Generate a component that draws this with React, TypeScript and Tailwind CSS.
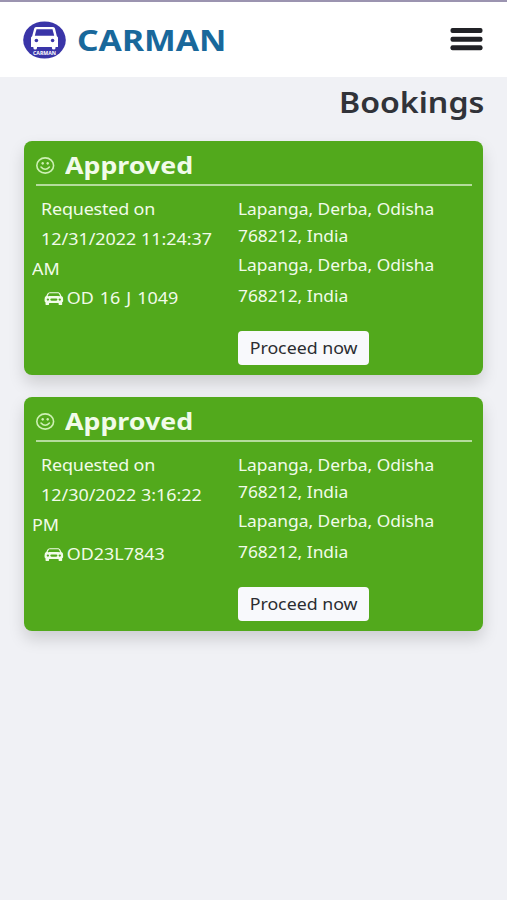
import { BsCarFrontFill } from "react-icons/bs";

const bookings = [
  {
    id: 1,
    status: "Approved",
    requestedOn: "12/31/2022 11:24:37 AM",
    vehicle: "OD 16 J 1049",
    from: ["Lapanga, Derba, Odisha", "768212, India"],
    to: ["Lapanga, Derba, Odisha", "768212, India"],
  },
  {
    id: 2,
    status: "Approved",
    requestedOn: "12/30/2022 3:16:22 PM",
    vehicle: "OD23L7843",
    from: ["Lapanga, Derba, Odisha", "768212, India"],
    to: ["Lapanga, Derba, Odisha", "768212, India"],
  },
];

type Booking = (typeof bookings)[number];

function Logo() {
  return (
    <svg width="43" height="38" viewBox="0 0 43 38">
      <ellipse cx="21.5" cy="19" rx="21.3" ry="18.6" fill="#3a35a8" />
      {/* Car body */}
      <path
        d="M13 6h17q1.700 0 2 1.500l1.800 7.500 1.200 1.500v9.500h-2.500v1q0 1.500-1.800 1.500t-1.800-1.500v-1H14v1q0 1.500-1.800 1.500t-1.800-1.500v-1H8v-9.500l1.200-1.500 2-7.500q.3-1.500 1.800-1.500z"
        fill="#fff"
      />
      <path d="M13.500 8.200h16l1.700 6.600h-19.400z" fill="#3a35a8" />
      <circle cx="13.400" cy="19.500" r="1.800" fill="#3a35a8" />
      <circle cx="29.600" cy="19.500" r="1.800" fill="#3a35a8" />
      <text
        x="21.500"
        y="34"
        fontSize="5"
        fontWeight="700"
        textAnchor="middle"
        textLength="23"
        lengthAdjust="spacingAndGlyphs"
        fill="#fff"
      >
        CARMAN
      </text>
    </svg>
  );
}

function MenuIcon() {
  return (
    <svg width="33" height="23" viewBox="0 0 33 23" fill="#212226">
      <rect x="0.500" width="32" height="5" rx="2" />
      <rect x="0.500" y="8.700" width="32" height="5" rx="2" />
      <rect x="0.500" y="17.300" width="32" height="5" rx="2" />
    </svg>
  );
}

function SmileIcon() {
  return (
    <svg width="19" height="17" viewBox="0 0 19 17" fill="none" stroke="#cdf0b4" strokeWidth="1.600">
      <ellipse cx="9.200" cy="8.500" rx="8.400" ry="7.600" />
      <path d="M5 10q4.200 4.600 8.400 0" strokeLinecap="round" />
      <ellipse cx="6.700" cy="6.300" rx="1.200" ry="1.400" fill="#cdf0b4" stroke="none" />
      <ellipse cx="11.700" cy="6.300" rx="1.200" ry="1.400" fill="#cdf0b4" stroke="none" />
    </svg>
  );
}

function BookingCard({ booking }: { booking: Booking }) {
  return (
    <div className="h-[234px] rounded-lg bg-[#52a91c] pl-3 pr-[11px] text-[#f1fbe9] shadow-[0_8px_16px_rgba(0,0,0,0.15)]">
      {/* Status */}
      <div className="flex h-[45px] items-center border-b-2 border-[#b5dc9c]">
        <div className="mt-[6px]">
          <SmileIcon />
        </div>
        <h3 className="ml-[10px] mt-[5px] origin-left scale-x-[1.115] text-2xl font-bold leading-none">
          {booking.status}
        </h3>
      </div>

      <div className="flex pt-2 text-base">
        <div className="-ml-1 w-[206px] shrink-0">
          <div className="w-[170px] origin-left scale-x-[1.12]">
            <p className="leading-[30px]">
              <span className="pl-2 tracking-[-0.15px]">Requested on</span>
              <br />
              <span className="pl-2">{booking.requestedOn}</span>
            </p>
            <p className="flex h-[28px] items-center whitespace-nowrap pl-[11px] [word-spacing:1.2px]">
              <BsCarFrontFill className="mr-[3px] h-[17px] w-[17px]" preserveAspectRatio="none" />
              {booking.vehicle}
            </p>
          </div>
        </div>

        <div className="pt-[2px]">
          <div className="origin-left scale-x-[1.085] whitespace-nowrap">
            <p className="leading-[27px]">
              {booking.from[0]}
              <br />
              {booking.from[1]}
            </p>
            <p className="leading-[31px]">
              {booking.to[0]}
              <br />
              {booking.to[1]}
            </p>
          </div>
          <button className="mt-[19px] flex h-[34px] w-[131px] items-center justify-center rounded-sm bg-[#f8f9fc] text-[#2b2d31]">
            <span className="scale-x-[1.11]">Proceed now</span>
          </button>
        </div>
      </div>
    </div>
  );
}

export default function App() {
  return (
    <div className="min-h-screen border-t-2 border-[#9b94b0] bg-[#f0f1f5] font-['Noto_Sans',sans-serif]">
      {/* Navbar */}
      <nav className="flex h-[75px] items-center justify-between bg-white pl-[23px] pr-[24px]">
        <div className="flex items-center">
          <Logo />
          <span className="ml-[11px] origin-left scale-x-[1.16] text-[29px] font-bold leading-none text-[#19689b]">
            CARMAN
          </span>
        </div>
        <MenuIcon />
      </nav>

      <div className="flex h-[64px] justify-end pr-[23px] pt-[7px]">
        <h2 className="origin-right scale-x-[1.09] text-[29.500px] font-semibold leading-[36px] text-[#313339]">
          Bookings
        </h2>
      </div>

      <div className="flex flex-col gap-[22px] px-6">
        {bookings.map((booking) => (
          <BookingCard key={booking.id} booking={booking} />
        ))}
      </div>
    </div>
  );
}
